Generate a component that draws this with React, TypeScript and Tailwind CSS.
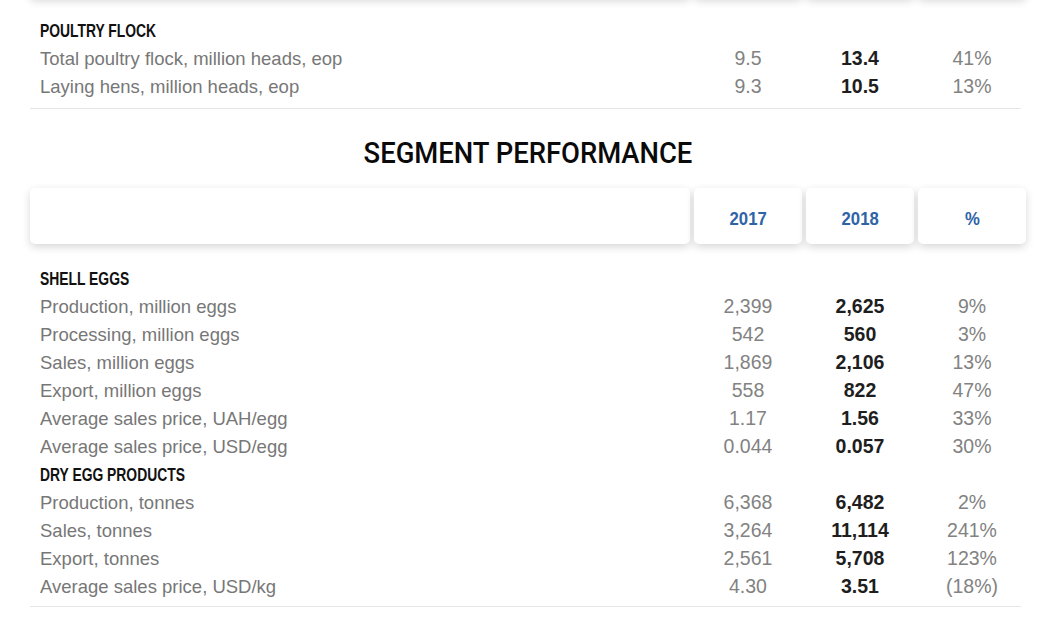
import React from 'react';
import clsx from 'clsx';

type Row = { label: string; y2017: string; y2018: string; pct: string };
type Group = { title: string; rows: Row[] };

const poultry: Group = {
	title: 'POULTRY FLOCK',
	rows: [
		{ label: 'Total poultry flock, million heads, eop', y2017: '9.5', y2018: '13.4', pct: '41%' },
		{ label: 'Laying hens, million heads, eop', y2017: '9.3', y2018: '10.5', pct: '13%' },
	],
};

const segment: Group[] = [
	{
		title: 'SHELL EGGS',
		rows: [
			{ label: 'Production, million eggs', y2017: '2,399', y2018: '2,625', pct: '9%' },
			{ label: 'Processing, million eggs', y2017: '542', y2018: '560', pct: '3%' },
			{ label: 'Sales, million eggs', y2017: '1,869', y2018: '2,106', pct: '13%' },
			{ label: 'Export, million eggs', y2017: '558', y2018: '822', pct: '47%' },
			{ label: 'Average sales price, UAH/egg', y2017: '1.17', y2018: '1.56', pct: '33%' },
			{ label: 'Average sales price, USD/egg', y2017: '0.044', y2018: '0.057', pct: '30%' },
		],
	},
	{
		title: 'DRY EGG PRODUCTS',
		rows: [
			{ label: 'Production, tonnes', y2017: '6,368', y2018: '6,482', pct: '2%' },
			{ label: 'Sales, tonnes', y2017: '3,264', y2018: '11,114', pct: '241%' },
			{ label: 'Export, tonnes', y2017: '2,561', y2018: '5,708', pct: '123%' },
			{ label: 'Average sales price, USD/kg', y2017: '4.30', y2018: '3.51', pct: '(18%)' },
		],
	},
];

const card =
	'h-[56px] bg-white rounded-[5px] shadow-[0_3px_9px_rgba(0,0,0,0.16)] flex items-center justify-center';

// Header row of cards: blank label card + year columns
const HeaderCards = ({ labels = true }: { labels?: boolean }) => (
	<div className="flex gap-[4px]">
		<div className={clsx(card, 'flex-1')} />
		{['2017', '2018', '%'].map((h) => (
			<div key={h} className={clsx(card, 'w-[108px] pt-[7px]')}>
				{labels && (
					<span className="inline-block scale-x-[0.88] text-[19px] font-bold text-[#2f63a8]">
						{h}
					</span>
				)}
			</div>
		))}
	</div>
);

const GroupTitle = ({ title }: { title: string }) => (
	<div className="h-[28px] flex items-center pl-[10px]">
		<span className="inline-block origin-left scale-x-[0.75] whitespace-nowrap text-[18.5px] font-bold text-[#111]">
			{title}
		</span>
	</div>
);

const DataRow = ({ row }: { row: Row }) => (
	<div className="h-[28px] flex items-center gap-[4px] text-[18.5px]">
		<div className="flex-1 pl-[10px] text-[#777]">{row.label}</div>
		<div className="w-[108px] text-center text-[19.5px] text-[#828282]">{row.y2017}</div>
		<div className="w-[108px] text-center text-[19.5px] font-bold text-[#1e1e1e]">{row.y2018}</div>
		<div className="w-[108px] text-center text-[19.5px] text-[#828282]">{row.pct}</div>
	</div>
);

const Divider = () => <div className="h-px mr-[5px] bg-[#e6e6e6]" />;

export default function App() {
	return (
		<div className="w-[1056px] h-[623px] overflow-hidden bg-white px-[30px] font-['Liberation_Sans',Arial,sans-serif]">
			{/* Previous section header, mostly off-screen */}
			<div className="-mt-[58px]">
				<HeaderCards labels={false} />
			</div>

			{/* Poultry flock */}
			<div className="mt-[19px] pb-[7px]">
				<GroupTitle title={poultry.title} />
				{poultry.rows.map((r) => (
					<DataRow key={r.label} row={r} />
				))}
			</div>
			<Divider />

			{/* Segment performance */}
			<div className="mt-[30px] h-[30px] flex items-center justify-center">
				<span className="inline-block scale-x-[0.945] whitespace-nowrap font-['Roboto',sans-serif] font-medium text-[29px] text-[#0a0a0a]">
					SEGMENT PERFORMANCE
				</span>
			</div>

			<div className="mt-[19px]">
				<HeaderCards />
			</div>

			<div className="mt-[21px] pb-[5px]">
				{segment.map((g) => (
					<React.Fragment key={g.title}>
						<GroupTitle title={g.title} />
						{g.rows.map((r) => (
							<DataRow key={r.label} row={r} />
						))}
					</React.Fragment>
				))}
			</div>
			<Divider />
		</div>
	);
}
